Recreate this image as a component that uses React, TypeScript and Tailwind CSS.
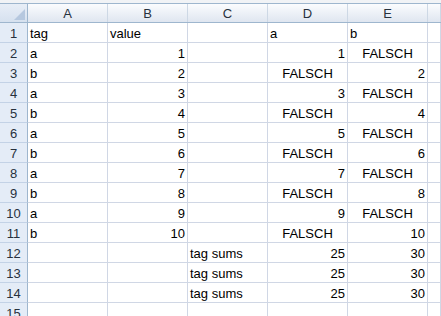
import React from "react";

type Cell = { v: string; align: "l" | "r" | "c" };

const L = (v: string): Cell => ({ v, align: "l" });
const R = (v: string): Cell => ({ v, align: "r" });
const C = (v: string): Cell => ({ v, align: "c" });
const E: Cell = { v: "", align: "l" };

const rows: Cell[][] = [];
rows.push([L("tag"), L("value"), E, L("a"), L("b"), E]);
for (let i = 1; i <= 10; i++) {
  const isA = i % 2 === 1;
  rows.push([
    L(isA ? "a" : "b"),
    R(String(i)),
    E,
    isA ? R(String(i)) : C("FALSCH"),
    isA ? C("FALSCH") : R(String(i)),
    E,
  ]);
}
for (let i = 0; i < 3; i++) {
  rows.push([E, E, L("tag sums"), R("25"), R("30"), E]);
}
rows.push([E, E, E, E, E, E]);

const colW = ["w-[80px]", "w-[80px]", "w-[80px]", "w-[80px]", "w-[80px]", "flex-1"];

export default function App() {
  return (
    <div
      className="w-[441px] h-[316px] overflow-hidden bg-white flex flex-col text-[13px] text-black"
      style={{ fontFamily: '"Liberation Sans", Arial, sans-serif' }}
    >
      <div className="h-[3px] shrink-0 bg-[#f1f3f6]" />
      {/* column header row */}
      <div className="flex h-[20px] shrink-0 border-t border-b border-[#9eb6ce] bg-gradient-to-b from-[#fbfcfe] to-[#dfe6f0]">
        <div className="w-[28px] shrink-0 border-r border-[#9eb6ce] bg-gradient-to-b from-[#e8eef7] to-[#d6e1ef] relative">
          <svg className="absolute right-[2px] bottom-[2px]" width="11" height="11" viewBox="0 0 11 11">
            <polygon points="11,0 11,11 0,11" fill="#b6c8df" />
          </svg>
        </div>
        {["A", "B", "C", "D", "E", ""].map((h, i) => (
          <div
            key={i}
            className={`${colW[i]} shrink-0 border-r border-[#cdd8e5] flex items-end justify-center pb-[1px] leading-[15px] text-[#27313d]`}
          >
            {h}
          </div>
        ))}
      </div>
      {rows.map((r, ri) => (
        <div key={ri} className="flex h-[20px] shrink-0">
          <div className="w-[28px] shrink-0 border-r border-b border-r-[#9eb6ce] border-b-[#c3d2e6] bg-[#e4ecf7] flex items-end justify-center pb-[1px] leading-[15px] text-[#27313d]">
            {ri + 1}
          </div>
          {r.map((c, ci) => (
            <div
              key={ci}
              className={`${colW[ci]} shrink-0 border-r border-b border-[#d0d7e5] flex items-end pb-[1px] leading-[15px] whitespace-nowrap overflow-visible ${
                c.align === "r"
                  ? "justify-end pr-[2px]"
                  : c.align === "c"
                  ? "justify-center"
                  : "justify-start pl-[2px]"
              }`}
            >
              {c.v}
            </div>
          ))}
        </div>
      ))}
    </div>
  );
}
